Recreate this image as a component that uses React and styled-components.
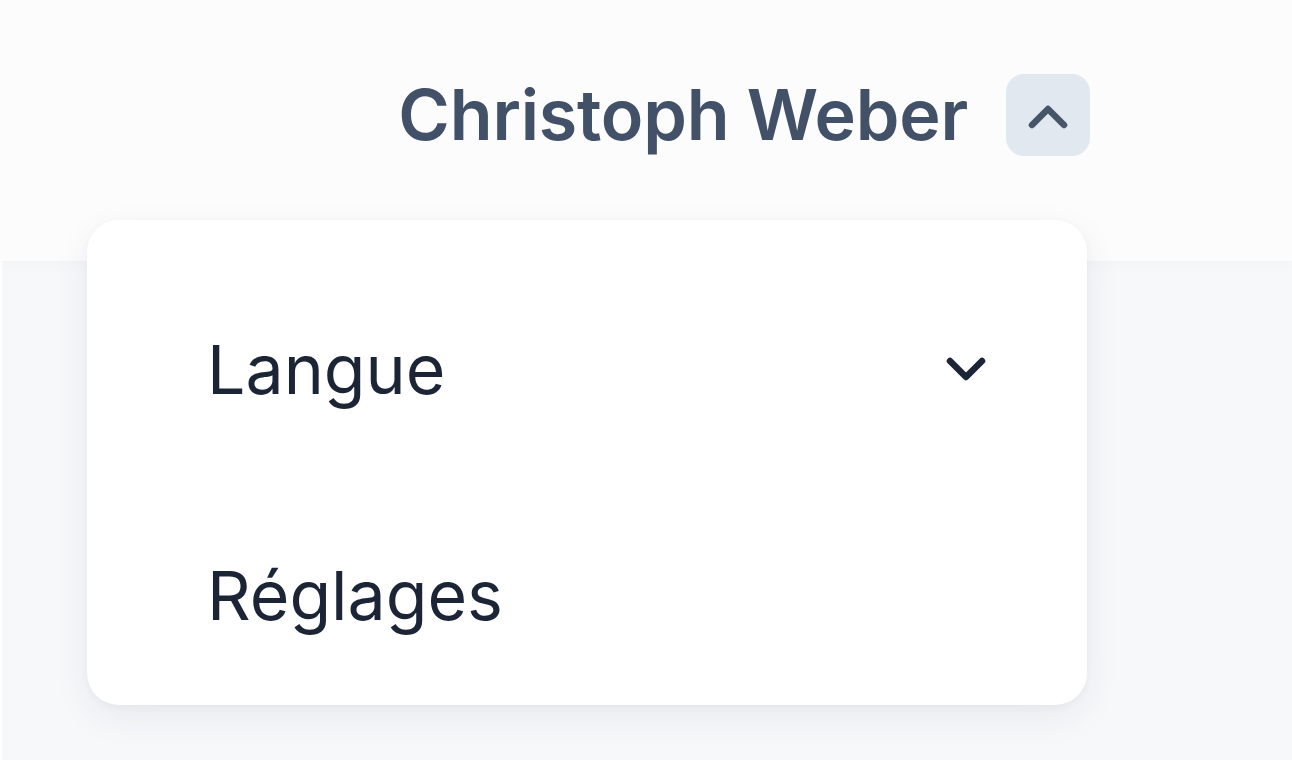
import React from "react";
import styled, { createGlobalStyle } from "styled-components";

const GlobalStyle = createGlobalStyle`
  html, body {
    margin: 0;
    padding: 0;
    background: #ffffff;
    font-family: Inter, "Noto Sans", sans-serif;
  }
`;

const Page = styled.div`
  position: relative;
  width: 1292px;
  height: 763px;
  overflow: hidden;
  background: #ffffff;
`;

const Header = styled.header`
  position: relative;
  z-index: 1;
  height: 261px;
  display: flex;
  align-items: flex-start;
  justify-content: flex-end;
  gap: 38px;
  padding: 74px 202px 0 0;
  box-sizing: border-box;
  background: #fcfcfd;
  box-shadow: 0 4px 14px rgba(30, 41, 59, 0.025);
`;

const UserName = styled.span`
  font-size: 70px;
  font-weight: 600;
  line-height: 82px;
  color: #435168;
  letter-spacing: -0.2px;
`;

const ToggleButton = styled.button`
  width: 84px;
  height: 82px;
  border: none;
  border-radius: 18px;
  background: #e2e8f0;
  display: flex;
  align-items: center;
  justify-content: center;
  padding: 0;
  cursor: pointer;
`;

const Main = styled.main`
  height: 499px;
  margin-left: 2px;
  background: #f7f8fa;
`;

const Menu = styled.div`
  position: absolute;
  z-index: 2;
  top: 220px;
  left: 87px;
  width: 1000px;
  height: 485px;
  box-sizing: border-box;
  padding: 36px 0 0;
  background: #ffffff;
  border-radius: 32px;
  box-shadow: 0 12px 36px rgba(30, 41, 59, 0.07), 0 2px 8px rgba(30, 41, 59, 0.03);
`;

const MenuItem = styled.div`
  height: 226px;
  display: flex;
  align-items: center;
  justify-content: space-between;
  padding: 0 98px 0 120px;
  font-size: 68px;
  font-weight: 400;
  color: #1c2536;
`;

const Chevron = ({ up, color }) => (
  <svg width="46" height="34" viewBox="0 0 46 34" fill="none">
    <polyline
      points={up ? "7,27 23,11 39,27" : "7,9 23,25 39,9"}
      stroke={color}
      strokeWidth="6.5"
      strokeLinecap="round"
      strokeLinejoin="round"
    />
  </svg>
);

export default function App() {
  return (
    <>
      <GlobalStyle />
      <Page>
        <Header>
          <UserName>Christoph Weber</UserName>
          <ToggleButton aria-label="Fermer le menu">
            <Chevron up color="#475569" />
          </ToggleButton>
        </Header>
        <Main />
        <Menu>
          <MenuItem>
            <span>Langue</span>
            <Chevron color="#1c2536" />
          </MenuItem>
          <MenuItem>
            <span>Réglages</span>
          </MenuItem>
        </Menu>
      </Page>
    </>
  );
}
